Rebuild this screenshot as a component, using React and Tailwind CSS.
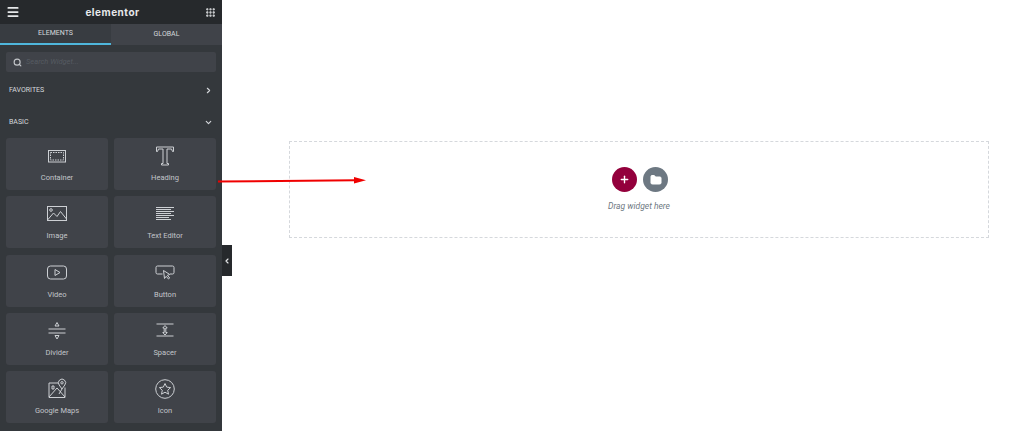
import React from 'react';
import { Menu, Grip, Search, ChevronRight, ChevronDown, ChevronLeft, Plus, Folder } from 'lucide-react';

const IconSvg = ({ children }) => (
  <svg width="24" height="24" viewBox="0 0 24 24" fill="none" stroke="#cdd0d4" strokeWidth="1">
    {children}
  </svg>
);

const widgets = [
  {
    name: 'Container',
    icon: (
      <>
        <rect x="3.5" y="6.5" width="17" height="11.5" />
        <rect x="5.5" y="8.5" width="13" height="7.5" strokeDasharray="1.5 1" />
      </>
    ),
  },
  {
    name: 'Heading',
    icon: <path d="M3.5 3h17v4.5h-1l-1-2.5h-4.5v14.5h1.5V21h-7v-1.5H10V5H5.5l-1 2.5h-1z" />,
  },
  {
    name: 'Image',
    icon: (
      <>
        <rect x="2.5" y="4.5" width="19" height="14" />
        <circle cx="6" cy="8" r="1.3" />
        <path d="M2.5 18l6-7 3.5 3.5 3.5-5 6 7.5" />
      </>
    ),
  },
  {
    name: 'Text Editor',
    icon: <path d="M3 5.5h18M3 7.5h15M3 9.5h18M3 11.5h15M3 13.5h18M3 15.5h13M3 17.5h15" strokeWidth="1.1" />,
  },
  {
    name: 'Video',
    icon: (
      <>
        <rect x="2.5" y="5" width="19" height="13" rx="3" />
        <path d="M10 8.5v6l5-3z" />
      </>
    ),
  },
  {
    name: 'Button',
    icon: (
      <>
        <path d="M9.5 13H4.5A1.5 1.5 0 0 1 3 11.5V6.5A1.5 1.5 0 0 1 4.5 5h15A1.5 1.5 0 0 1 21 6.5v5a1.5 1.5 0 0 1-1.5 1.5H17" />
        <path d="M10.5 9.5l1 8 1.7-2.2 2.3 2.7 1.2-1-2.3-2.7 2.4-.8z" />
      </>
    ),
  },
  {
    name: 'Divider',
    icon: (
      <>
        <path d="M3.5 10h17M3.5 14h17" />
        <path d="M12 3.5l2 3.5h-4zM12 20l-2-3.5h4z" />
      </>
    ),
  },
  {
    name: 'Spacer',
    icon: (
      <>
        <path d="M3.5 5h17M3.5 17h17" />
        <path d="M12 6.5l2.2 2.5h-1.4v4.5h1.4L12 16l-2.2-2.5h1.4V9H9.8z" />
      </>
    ),
  },
  {
    name: 'Google Maps',
    icon: (
      <>
        <path d="M13.5 6H4v14.5h16V10.5" />
        <path d="M4 20l8-9 8 9M7 9h2v3H7zM14 17l3-5" />
        <path d="M17 12l-2.8-4a3.6 3.6 0 1 1 5.6 0z" />
        <circle cx="17" cy="5.8" r="1.2" />
      </>
    ),
  },
  {
    name: 'Icon',
    icon: (
      <>
        <circle cx="12" cy="12" r="9.3" />
        <path d="M12 6.5l1.7 3.6 3.9.5-2.9 2.7.8 3.9-3.5-2-3.5 2 .8-3.9-2.9-2.7 3.9-.5z" />
      </>
    ),
  },
];

const WidgetCard = ({ widget }) => (
  <div className="h-[52px] bg-[#404349] rounded-[3px] flex flex-col items-center pt-[4px]">
    <div className="h-[28px] flex items-center">
      <IconSvg>{widget.icon}</IconSvg>
    </div>
    <span className="mt-[2px] text-[7.5px] leading-[12px] text-[#c2c5c9]">{widget.name}</span>
  </div>
);

const App = () => {
  return (
    <div className="relative flex h-[431px] w-[1024px] overflow-hidden bg-white font-['Roboto',sans-serif]">
      {/* sidebar */}
      <aside className="w-[222px] shrink-0 bg-[#34383c] flex flex-col">
        <div className="h-[24px] bg-[#26292c] flex items-center justify-between pl-[6px] pr-[6px]">
          <Menu size={14} color="#e6e8ea" strokeWidth={3} />
          <span className="text-[10px] font-bold tracking-[0.5px] text-[#e6e8ea] font-['Inter',sans-serif]">elementor</span>
          <Grip size={11} color="#e6e8ea" strokeWidth={3} />
        </div>

        <div className="h-[21px] flex text-[7px] font-normal text-[#d5d8dc]">
          <div className="w-[111px] bg-[#383c41] border-b-2 border-[#4fb6dc] flex items-center justify-center">ELEMENTS</div>
          <div className="flex-1 bg-[#404349] flex items-center justify-center">GLOBAL</div>
        </div>

        <div className="px-[6px] mt-[7px]">
          <div className="h-[20px] bg-[#404349] rounded-[2px] flex items-center pl-[7px] gap-[4px]">
            <Search size={9} color="#c2c5c9" strokeWidth={3} />
            <span className="text-[7.5px] italic text-[#565b62]">Search Widget...</span>
          </div>
        </div>

        <div className="mt-[12px] h-[12px] pl-[9px] pr-[9px] flex items-center justify-between text-[7px] font-normal text-[#d5d8dc]">
          <span>FAVORITES</span>
          <ChevronRight size={9} color="#d5d8dc" strokeWidth={3} />
        </div>
        <div className="mt-[20px] h-[13px] pl-[9px] pr-[9px] flex items-center justify-between text-[7px] font-normal text-[#d5d8dc]">
          <span>BASIC</span>
          <ChevronDown size={9} color="#d5d8dc" strokeWidth={3} />
        </div>

        <div className="mt-[9px] px-[6px] grid grid-cols-2 gap-x-[6px] gap-y-[6.25px]">
          {widgets.map((w) => (
            <WidgetCard key={w.name} widget={w} />
          ))}
        </div>
      </aside>

      {/* canvas */}
      <main className="flex-1 pl-[67px] pr-[35px] pt-[141px]">
        <div className="h-[97px] border border-dashed border-[#d5d8dc] flex flex-col items-center pt-[25px] pl-[2px]">
          <div className="flex gap-[6px]">
            <div className="w-[25px] h-[25px] rounded-full bg-[#93003c] flex items-center justify-center">
              <Plus size={11} color="#fff" strokeWidth={3} />
            </div>
            <div className="w-[25px] h-[25px] rounded-full bg-[#6d7882] flex items-center justify-center">
              <Folder size={12} color="#fff" fill="#fff" />
            </div>
          </div>
          <span className="mt-[8px] mr-[2px] text-[8.5px] leading-[12px] italic text-[#6d7882] font-['Roboto',sans-serif]">Drag widget here</span>
        </div>
      </main>

      {/* sidebar collapse tab */}
      <div className="absolute left-[222px] top-[245px] w-[10px] h-[31px] bg-[#26292c] flex items-center justify-center">
        <ChevronLeft size={8} color="#e6e8ea" strokeWidth={3.5} />
      </div>

      {/* red annotation arrow */}
      <svg className="absolute left-[218px] top-[174px]" width="150" height="12" viewBox="0 0 150 12">
        <line x1="0" y1="7.5" x2="138" y2="6.2" stroke="#f00000" strokeWidth="2" />
        <path d="M136 3l12 3.2-12 3.2z" fill="#f00000" />
      </svg>
    </div>
  );
};

export default App;
